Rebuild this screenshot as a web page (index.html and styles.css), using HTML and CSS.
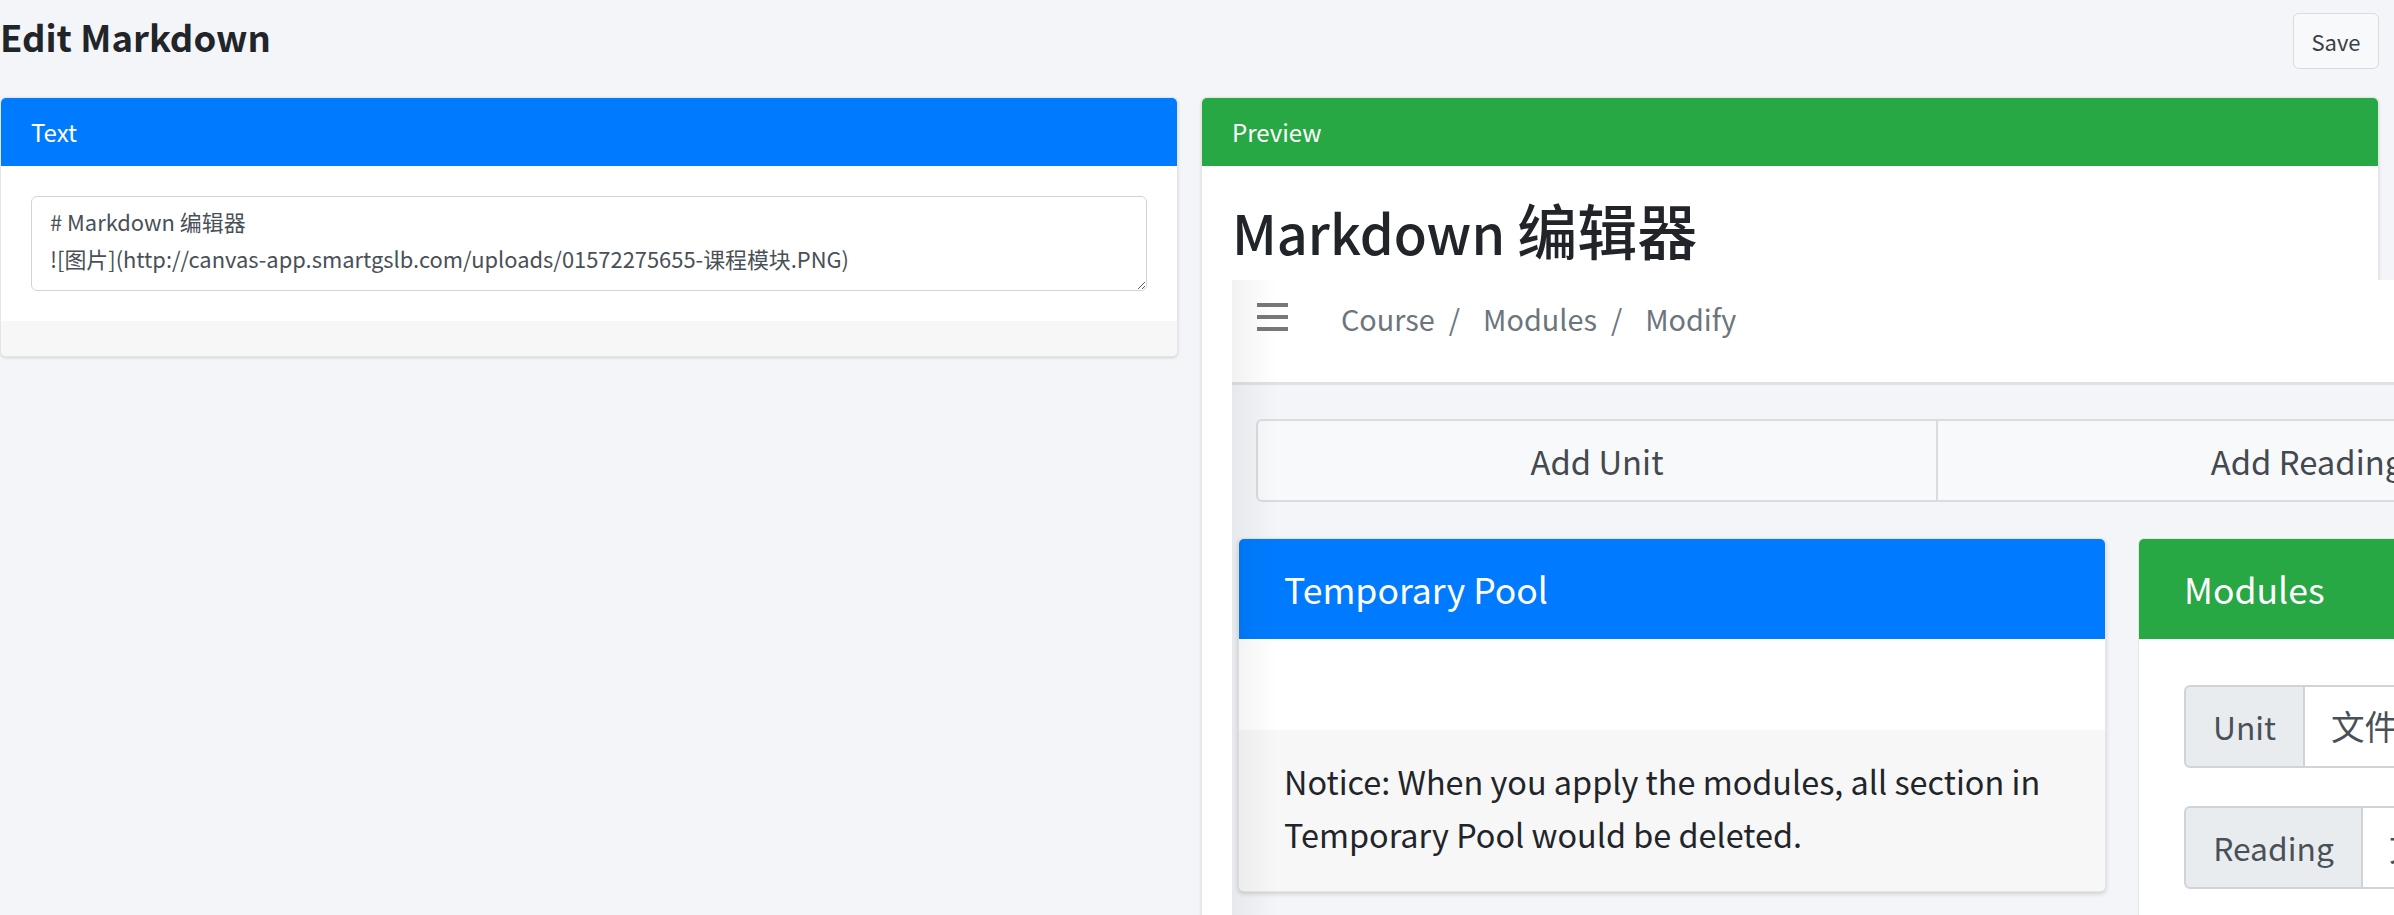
FILE: index.html
```html
<!DOCTYPE html>
<html lang="zh">
<head>
<meta charset="utf-8">
<title>Edit Markdown</title>
<link rel="stylesheet" href="styles.css">
</head>
<body>
<div class="page">
  <header class="topbar">
    <h3 class="page-title">Edit Markdown</h3>
    <button class="btn-save" type="button">Save</button>
  </header>
  <div class="editor-row">
    <section class="card card-text">
      <div class="card-header header-blue">Text</div>
      <div class="card-body">
        <textarea class="md-input" spellcheck="false"># Markdown 编辑器
![图片](http://canvas-app.smartgslb.com/uploads/01572275655-课程模块.PNG)</textarea>
      </div>
      <div class="card-footer"></div>
    </section>
    <section class="card card-preview">
      <div class="card-header header-green">Preview</div>
      <div class="card-body preview-body">
        <h1 class="md-h1">Markdown <span class="cjk">编辑器</span></h1>
        <div class="shot" role="img" aria-label="图片">
          <div class="shot-nav">
            <span class="hamburger"><i></i><i></i><i></i></span>
            <ol class="crumbs">
              <li>Course</li>
              <li>Modules</li>
              <li>Modify</li>
            </ol>
          </div>
          <div class="shot-main">
            <div class="add-group">
              <span class="add-btn add-unit">Add Unit</span>
              <span class="add-btn add-reading">Add Reading</span>
            </div>
            <div class="shot-cards">
              <div class="pool-card">
                <div class="pool-header">Temporary Pool</div>
                <div class="pool-body"></div>
                <div class="pool-footer">Notice: When you apply the modules, all section in<br>Temporary Pool would be deleted.</div>
              </div>
              <div class="mod-card">
                <div class="mod-header">Modules</div>
                <div class="mod-body">
                  <div class="ig"><span class="ig-label ig-unit">Unit</span><span class="ig-input">文件管理</span></div>
                  <div class="ig"><span class="ig-label ig-reading">Reading</span><span class="ig-input">文章阅读</span></div>
                </div>
              </div>
            </div>
          </div>
          <div class="shot-shade"></div>
        </div>
      </div>
    </section>
  </div>
</div>
</body>
</html>
```

FILE: styles.css
```css
* { box-sizing: border-box; }

html, body {
  margin: 0;
  overflow: hidden;
}

body {
  background: #f4f5f8;
  font-family: "Noto Sans CJK SC", "Noto Sans", sans-serif;
  color: #212529;
  font-size: 24px;
  line-height: 1.5;
}

.page {
  padding: 0 15px 0 0;
}

.topbar {
  display: flex;
  justify-content: space-between;
  align-items: flex-start;
  height: 97px;
}

.page-title {
  margin: 0;
  padding-top: 12px;
  font-size: 36.5px;
  line-height: 50px;
  font-weight: 600;
}

.btn-save {
  margin-top: 13px;
  width: 86px;
  height: 56px;
  padding: 0;
  border: 1px solid #d9dbde;
  border-radius: 6px;
  background: #f8f9fa;
  color: #3a3f44;
  font-family: inherit;
  font-size: 22px;
  line-height: 36px;
}

.editor-row {
  display: flex;
  gap: 23px;
  align-items: flex-start;
}

.card {
  flex: 1 1 0;
  min-width: 0;
  background: #fff;
  border: 1px solid rgba(0, 0, 0, 0.1);
  border-radius: 6px;
  box-shadow: 0 1px 3px rgba(0, 0, 0, 0.14);
}

.card-header {
  height: 68px;
  padding: 0 30px;
  display: flex;
  align-items: center;
  color: #fff;
  font-size: 24px;
  border-radius: 5px 5px 0 0;
}

.header-blue { background: #007bff; }
.header-green { background: #28a745; }

.card-body {
  padding: 30px;
}

.md-input {
  display: block;
  width: 100%;
  height: 95px;
  padding: 6px 18px;
  border: 1px solid #ced4da;
  border-radius: 6px;
  font-family: inherit;
  font-size: 21.9px;
  line-height: 37px;
  color: #495057;
  background: #fff;
  resize: vertical;
  overflow: hidden;
}

.card-footer {
  height: 35px;
  background: #f7f7f7;
  border-radius: 0 0 5px 5px;
}

.card-preview {
  height: 1000px;
}

.preview-body {
  padding: 30px 30px 0;
}

.md-h1 {
  height: 72px;
  margin: 0 0 12px;
  font-size: 54px;
  line-height: 72px;
  font-weight: 500;
  white-space: nowrap;
}

.md-h1 .cjk {
  font-size: 60px;
  line-height: 1;
}

/* embedded screenshot image */
.shot {
  position: relative;
  width: 1500px;
  height: 700px;
  background: #f4f5f8;
  overflow: hidden;
  font-size: 32.4px;
  line-height: 1.5;
}

.shot-nav {
  height: 105px;
  background: #fff;
  border-bottom: 3px solid #dfe1e4;
  display: flex;
  align-items: flex-start;
  padding-left: 25px;
}

.hamburger {
  display: flex;
  flex-direction: column;
  gap: 8px;
  width: 31px;
  margin-top: 23px;
}

.hamburger i {
  display: block;
  height: 4px;
  background: #787878;
}

.crumbs {
  list-style: none;
  margin: 17px 0 0 53px;
  padding: 0;
  display: flex;
  color: #6c757d;
  font-size: 28.8px;
  line-height: 44px;
}

.crumbs li + li::before {
  content: "/";
  padding: 0 23px 0 14px;
}

.shot-main {
  padding: 34px 0 0 0;
}

.add-group {
  display: flex;
  margin-left: 24px;
}

.add-btn {
  height: 83px;
  display: flex;
  align-items: center;
  justify-content: center;
  background: #f8f9fa;
  border: 2px solid #d9dbde;
  color: #43494f;
  font-size: 32.8px;
}

.add-unit {
  width: 682px;
  border-radius: 6px 0 0 6px;
}

.add-reading {
  width: 742px;
  margin-left: -2px;
}

.shot-cards {
  display: flex;
  gap: 32px;
  margin: 36px 0 0 6px;
  align-items: flex-start;
}

.pool-card {
  width: 868px;
  flex: none;
  background: #fff;
  border: 1px solid rgba(0, 0, 0, 0.1);
  border-radius: 6px;
  box-shadow: 0 2px 4px rgba(0, 0, 0, 0.16);
}

.pool-header,
.mod-header {
  height: 100px;
  display: flex;
  align-items: center;
  padding-left: 45px;
  color: #fff;
  font-size: 35.6px;
  border-radius: 5px 5px 0 0;
}

.pool-header { background: #007bff; }
.mod-header { background: #28a745; }

.pool-body {
  height: 91px;
}

.pool-footer {
  padding: 24px 45px 31px;
  line-height: 53px;
  white-space: nowrap;
  background: #f7f7f7;
  border-radius: 0 0 5px 5px;
  color: #212529;
}

.mod-card {
  width: 900px;
  flex: none;
  height: 600px;
  background: #fff;
  border: 1px solid rgba(0, 0, 0, 0.1);
  border-radius: 6px;
}

.mod-body {
  padding: 46px 0 0 45px;
}

.ig {
  display: flex;
  height: 83px;
  margin-bottom: 38px;
}

.ig-label {
  display: flex;
  align-items: center;
  justify-content: center;
  background: #e9ecef;
  border: 2px solid #ced4da;
  border-radius: 6px 0 0 6px;
  color: #495057;
  font-size: 31.8px;
}

.ig-unit { width: 121px; }
.ig-reading { width: 179px; }

.ig-input {
  width: 600px;
  display: flex;
  align-items: center;
  padding-left: 26px;
  background: #fff;
  border: 2px solid #ced4da;
  border-left: 0;
  color: #495057;
  font-size: 33.6px;
}

.shot-shade {
  position: absolute;
  left: 0;
  top: 0;
  bottom: 0;
  width: 45px;
  background: linear-gradient(to right, rgba(0, 0, 0, 0.05), rgba(0, 0, 0, 0));
  pointer-events: none;
}
```
